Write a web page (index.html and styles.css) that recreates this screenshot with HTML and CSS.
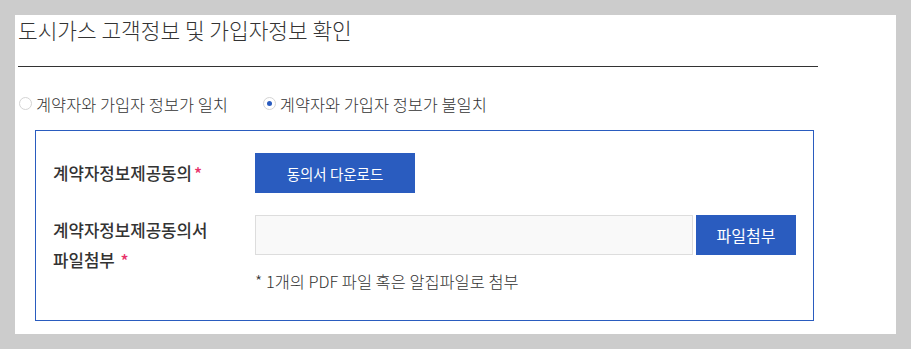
FILE: index.html
```html
<!DOCTYPE html>
<html>
<head>
<meta charset="utf-8">
<title>도시가스 고객정보 및 가입자정보 확인</title>
<link rel="stylesheet" href="styles.css">
</head>
<body>
<div class="panel">
  <h2 class="title">도시가스 고객정보 및 가입자정보 확인</h2>

  <div class="radios">
    <label class="radio"><span class="dot"></span>계약자와 가입자 정보가 일치</label>
    <label class="radio checked"><span class="dot"></span>계약자와 가입자 정보가 불일치</label>
  </div>

  <div class="box">
    <div class="row">
      <div class="label">계약자정보제공동의<span class="req">*</span></div>
      <div class="field">
        <button class="btn btn-down">동의서 다운로드</button>
      </div>
    </div>
    <div class="row">
      <div class="label label-two">계약자정보제공동의서<br>파일첨부 <span class="req">*</span></div>
      <div class="field">
        <div class="file">
          <div class="file-input"></div>
          <button class="btn btn-file">파일첨부</button>
        </div>
        <p class="note">* 1개의 PDF 파일 혹은 알집파일로 첨부</p>
      </div>
    </div>
  </div>
</div>
</body>
</html>
```

FILE: styles.css
```css
body {
  margin: 0;
  padding: 15px;
  background-color: #cccccc;
  font-family: "Noto Sans CJK KR", "Noto Sans", sans-serif;
  color: #333;
}

.panel {
  width: 878px;
  height: 319px;
  padding-left: 3px;
  background-color: #fff;
  box-sizing: content-box;
}

.title {
  width: 800px;
  margin: 0;
  padding-top: 1px;
  height: 50px;
  border-bottom: 1px solid #333;
  font-size: 21.4px;
  font-weight: 300;
  line-height: 28px;
}

.radios {
  display: flex;
  height: 63px;
  padding-top: 10px;
  box-sizing: border-box;
  align-items: center;
  font-size: 16.4px;
  font-weight: 300;
  padding-left: 1px;
}

.radio {
  display: flex;
  align-items: center;
  margin-right: 35px;
}

.radio .dot {
  width: 11px;
  height: 11px;
  border: 1px solid #d4d4d4;
  border-radius: 50%;
  margin-right: 4px;
  position: relative;
}

.radio.checked .dot::after {
  content: "";
  position: absolute;
  left: 3px;
  top: 3px;
  width: 5px;
  height: 5px;
  border-radius: 50%;
  background-color: #2a5cbf;
}

.box {
  margin-left: 17px;
  width: 779px;
  height: 191px;
  border: 1px solid #2a5cbf;
  padding: 22px 0 0 17px;
  box-sizing: border-box;
}

.row {
  display: flex;
  margin-bottom: 22px;
}

.label {
  width: 202px;
  font-size: 16.8px;
  font-weight: 500;
  line-height: 40px;
}

.label-two {
  line-height: 30px;
}

.req {
  color: #e8336b;
  margin-left: 2px;
}

.btn {
  border: none;
  background-color: #2a5cbf;
  color: #fff;
  font-family: inherit;
  cursor: pointer;
}

.btn-down {
  width: 160px;
  height: 40px;
  font-size: 14.5px;
}

.file {
  display: flex;
  gap: 3px;
}

.file-input {
  width: 436px;
  height: 38px;
  border: 1px solid #dddddd;
  background-color: #f9f9f9;
}

.btn-file {
  width: 100px;
  height: 40px;
  font-size: 16px;
}

.note {
  margin: 14px 0 0;
  font-size: 16.4px;
  font-weight: 300;
}
```
